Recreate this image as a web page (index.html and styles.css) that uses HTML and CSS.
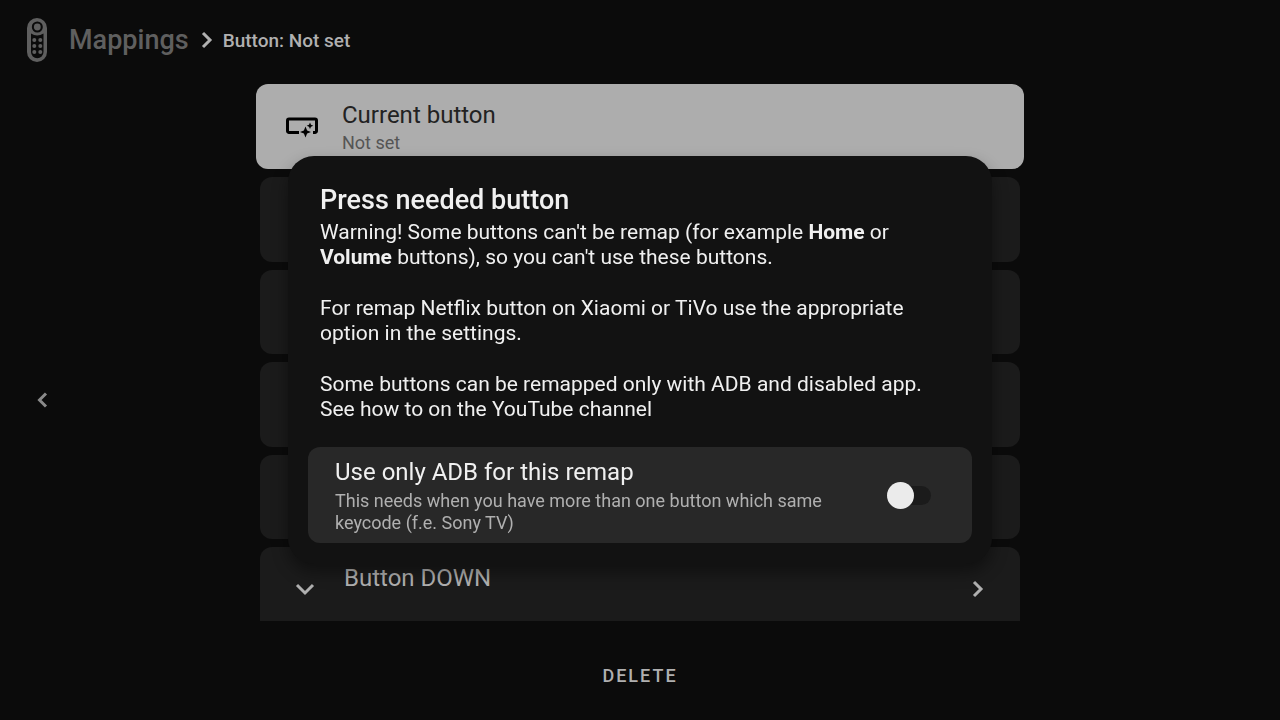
FILE: index.html
```html
<!DOCTYPE html>
<html lang="en">

<head>
    <meta charset="UTF-8">
    <meta name="viewport" content="width=device-width, initial-scale=1.0">
    <title>Button Mapper</title>
    <link rel="stylesheet" href="styles.css">
</head>

<body>
    <div class="screen">
        <header class="header">
            <svg class="logo" viewBox="0 0 20 44" aria-hidden="true">
                <rect width="20" height="44" rx="10" fill="#5f5f5f" />
                <circle cx="10.300" cy="9" r="5.500" fill="#0b0b0b" />
                <circle cx="10.300" cy="9" r="3.400" fill="#5f5f5f" />
                <path d="M4 15.500q6 4 12.500 0V34a6.200 6.200 0 0 1-12.500 0z" fill="#0b0b0b" />
                <g fill="#5f5f5f">
                    <circle cx="7.300" cy="22" r="2" />
                    <circle cx="13.300" cy="22" r="2" />
                    <circle cx="7.300" cy="28" r="2" />
                    <circle cx="13.300" cy="28" r="2" />
                    <circle cx="7.300" cy="34" r="2" />
                    <circle cx="13.300" cy="34" r="2" />
                </g>
            </svg>
            <a class="crumb" href="#">Mappings</a>
            <svg class="chevron" viewBox="0 0 12 18" aria-hidden="true">
                <path d="M2 2l7 7-7 7" />
            </svg>
            <h1 class="title">Button: Not set</h1>
        </header>

        <main class="content">
            <button class="back" aria-label="Back">
                <svg class="chevron" viewBox="0 0 12 18">
                    <path d="M9 2.500L2.500 9 9 15.500" />
                </svg>
            </button>
            <div class="list">
                <button class="current">
                    <svg class="current-icon" viewBox="0 0 32 20" aria-hidden="true">
                        <path d="M13 15.500H3A1.500 1.500 0 0 1 1.500 14V3.500A1.500 1.500 0 0 1 3 2h26a1.500 1.500 0 0 1 1.500 1.500V14a1.500 1.500 0 0 1-1.500 1.500h-2" fill="none" stroke="#000" stroke-width="3" />
                        <path d="M19.500 9.500l1.600 3.900 3.900 1.600-3.900 1.600-1.600 3.900-1.600-3.900-3.900-1.600 3.900-1.600zM24 5.500l1 2.300 2.300 1-2.300 1-1 2.300-1-2.300-2.300-1 2.300-1z" />
                    </svg>
                    <span class="labels">
                        <span class="name">Current button</span>
                        <span class="value">Not set</span>
                    </span>
                </button>
                <div class="rows">
                    <div class="row"></div>
                    <div class="row"></div>
                    <div class="row"></div>
                    <div class="row"></div>
                    <button class="row last">
                        <svg class="expand" viewBox="0 0 20 14" aria-hidden="true">
                            <path d="M2 3l8 8 8-8" />
                        </svg>
                        <span class="name">Button DOWN</span>
                        <svg class="chevron" viewBox="0 0 12 18" aria-hidden="true">
                            <path d="M2 2l7 7-7 7" />
                        </svg>
                    </button>
                </div>
            </div>
        </main>

        <footer class="footer">
            <button class="delete">DELETE</button>
        </footer>
    </div>

    <div class="overlay">
        <div class="dialog" role="dialog" aria-labelledby="dialog-title">
            <div class="message">
                <h2 id="dialog-title">Press needed button</h2>
                <p>Warning! Some buttons can't be remap (for example <b>Home</b> or<br><b>Volume</b> buttons), so you can't use these buttons.</p>
                <p>For remap Netflix button on Xiaomi or TiVo use the appropriate<br>option in the settings.</p>
                <p>Some buttons can be remapped only with ADB and disabled app.<br>See how to on the YouTube channel</p>
            </div>
            <label class="option" for="adb">
                <span class="labels">
                    <span class="name">Use only ADB for this remap</span>
                    <span class="hint">This needs when you have more than one button which same<br>keycode (f.e. Sony TV)</span>
                </span>
                <input class="switch" type="checkbox" id="adb">
            </label>
        </div>
    </div>
</body>

</html>
```
FILE: styles.css
```css
* {
    box-sizing: border-box;
}

body {
    margin: 0;
    background: #0b0b0b;
    color: #b0b0b0;
    font-family: Roboto, "Liberation Sans", sans-serif;
}

button {
    border: none;
    background: none;
    padding: 0;
    color: inherit;
    font-family: inherit;
    text-align: left;
    cursor: pointer;
}

.screen {
    min-height: 100vh;
    display: flex;
    flex-direction: column;
}

.header {
    display: flex;
    align-items: center;
    height: 80px;
    padding: 0 27px;
}

.logo {
    width: 20px;
    height: 44px;
    margin-right: 22px;
}

.crumb {
    color: #5f5f5f;
    font-size: 27px;
    font-weight: 500;
    text-decoration: none;
}

.header .chevron {
    margin: 0 10px 0 12px;
}

.title {
    margin: 0;
    font-size: 19px;
    font-weight: 500;
}

.chevron {
    width: 12px;
    height: 18px;
    fill: none;
    stroke: #b0b0b0;
    stroke-width: 3;
}

.content {
    flex: 1;
    display: grid;
    grid-template-columns: 1fr 60% 1fr;
    padding-top: 4px;
}

.back {
    justify-self: start;
    align-self: center;
    margin: 94px 0 0 37px;
}

.back .chevron {
    display: block;
    stroke: #8a8a8a;
}

.list {
    grid-column: 2;
    display: flex;
    flex-direction: column;
    gap: 8px;
}

.current {
    display: flex;
    align-items: center;
    gap: 24px;
    height: 85px;
    padding: 0 30px;
    border-radius: 12px;
    background: #adadad;
}

.current-icon {
    width: 32px;
    height: 20px;
    overflow: visible;
}

.labels {
    display: flex;
    flex-direction: column;
}

.name {
    font-size: 24px;
    line-height: 32px;
}

.current .name {
    color: #222;
}

.value {
    color: #555;
    font-size: 18px;
    line-height: 24px;
}

.rows {
    flex: 1;
    display: grid;
    grid-template-rows: repeat(4, 1fr) 74px;
    gap: 8px;
    padding: 0 4px;
}

.row {
    border-radius: 12px;
    background: #1b1b1b;
}

.last {
    display: flex;
    align-items: center;
    padding: 10px 36px 0 35px;
    border-radius: 12px 12px 0 0;
}

.last .name {
    flex: 1;
    margin: 0 0 22px 29px;
}

.expand {
    width: 20px;
    height: 14px;
    fill: none;
    stroke: #b0b0b0;
    stroke-width: 3;
}

.footer {
    display: flex;
    justify-content: center;
    align-items: center;
    height: 99px;
    padding-top: 10px;
}

.delete {
    font-size: 18px;
    font-weight: 500;
    letter-spacing: 2px;
}

.overlay {
    position: fixed;
    inset: 0;
    display: flex;
    justify-content: center;
    align-items: center;
}

.dialog {
    width: 55%;
    padding: 28px 20px 21px;
    border-radius: 26px;
    background: #121212;
    color: #f0f0f0;
    box-shadow: 0 8px 16px rgba(0, 0, 0, 0.4);
}

.message {
    padding: 0 12px;
}

.message h2 {
    margin: 0 0 4px;
    font-size: 27px;
    font-weight: 500;
    line-height: 32px;
}

.message p {
    margin: 0 0 26px;
    font-size: 21px;
    line-height: 25px;
}

.message p:last-child {
    margin-bottom: 25px;
}

.option {
    display: flex;
    justify-content: space-between;
    align-items: center;
    padding: 9px 41px 9px 27px;
    border-radius: 12px;
    background: #282828;
}

.option .labels {
    gap: 2px;
}

.hint {
    color: #b0b0b0;
    font-size: 18px;
    line-height: 22px;
}

.switch {
    appearance: none;
    display: flex;
    align-items: center;
    width: 42px;
    height: 19px;
    margin: 0;
    border-radius: 10px;
    background: #1b1b1b;
}

.switch::before {
    content: "";
    width: 27px;
    height: 27px;
    flex: none;
    margin-left: -2px;
    border-radius: 50%;
    background: #ebebeb;
}

.switch:checked::before {
    margin-left: 17px;
}
```
